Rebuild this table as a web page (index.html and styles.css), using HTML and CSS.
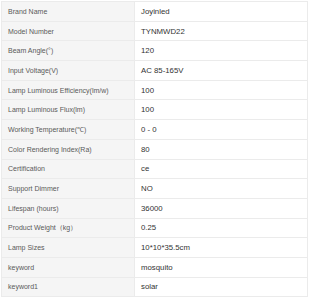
FILE: index.html
```html
<!DOCTYPE html>
<html lang="en">
<head>
    <meta charset="UTF-8">
    <meta name="viewport" content="width=device-width, initial-scale=1.0">
    <title>Product Specs</title>
    <link rel="stylesheet" href="styles.css">
</head>
<body>
    <!-- Specification table -->
    <table class="spec-table">
        <tbody>
            <tr><td class="label">Brand Name</td><td class="value">Joyinled</td></tr>
            <tr><td class="label">Model Number</td><td class="value">TYNMWD22</td></tr>
            <tr><td class="label">Beam Angle(°)</td><td class="value">120</td></tr>
            <tr><td class="label">Input Voltage(V)</td><td class="value">AC 85-165V</td></tr>
            <tr><td class="label">Lamp Luminous Efficiency(lm/w)</td><td class="value">100</td></tr>
            <tr><td class="label">Lamp Luminous Flux(lm)</td><td class="value">100</td></tr>
            <tr><td class="label">Working Temperature(℃)</td><td class="value">0 - 0</td></tr>
            <tr><td class="label">Color Rendering Index(Ra)</td><td class="value">80</td></tr>
            <tr><td class="label">Certification</td><td class="value">ce</td></tr>
            <tr><td class="label">Support Dimmer</td><td class="value">NO</td></tr>
            <tr><td class="label">Lifespan (hours)</td><td class="value">36000</td></tr>
            <tr><td class="label">Product Weight（kg）</td><td class="value">0.25</td></tr>
            <tr><td class="label">Lamp Sizes</td><td class="value">10*10*35.5cm</td></tr>
            <tr><td class="label">keyword</td><td class="value">mosquito</td></tr>
            <tr><td class="label">keyword1</td><td class="value">solar</td></tr>
        </tbody>
    </table>
</body>
</html>
```

FILE: styles.css
```css
body {
    font-family: "Liberation Sans", Arial, sans-serif;
    background-color: #fff;
    color: #333;
    margin: 0;
    padding: 1px 0 0 1px;
}
.spec-table {
    width: 307px;
    border-collapse: collapse;
}
.spec-table td {
    height: 19.7px;
    padding: 0 6px;
    border: 1px solid #ebebeb;
    text-align: left;
    box-sizing: border-box;
}
.spec-table .label {
    width: 133px;
    background-color: #f5f5f5;
    color: #5a5a5a;
    font-size: 7px;
}
.spec-table .value {
    color: #333;
    font-size: 7.8px;
}
```
